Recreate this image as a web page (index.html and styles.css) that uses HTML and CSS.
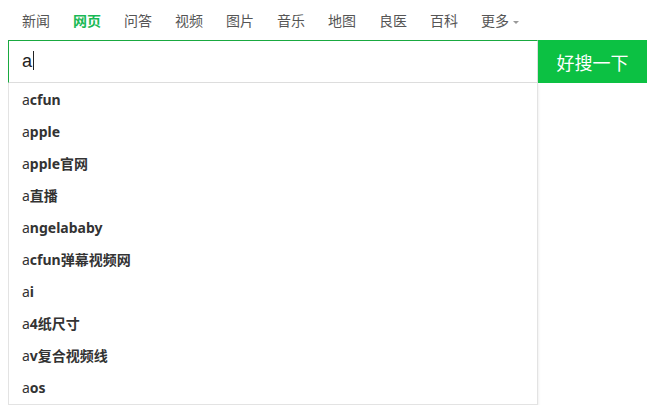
FILE: index.html
```html
<!DOCTYPE html>
<html lang="zh-CN">
<head>
    <meta charset="UTF-8">
    <meta name="viewport" content="width=device-width, initial-scale=1.0">
    <link rel="stylesheet" href="styles.css">
</head>
<body>

    <div class="navbar">
        <a href="#">新闻</a>
        <a href="#" class="active">网页</a>
        <a href="#">问答</a>
        <a href="#">视频</a>
        <a href="#">图片</a>
        <a href="#">音乐</a>
        <a href="#">地图</a>
        <a href="#">良医</a>
        <a href="#">百科</a>
        <a href="#" class="more">更多<span class="caret"></span></a>
    </div>

    <div class="search">
        <div class="search-row">
            <div class="search-input">a<span class="cursor"></span></div>
            <button class="search-btn">好搜一下</button>
        </div>
        <ul class="suggest">
            <li>a<b>cfun</b></li>
            <li>a<b>pple</b></li>
            <li>a<b>pple官网</b></li>
            <li>a<b>直播</b></li>
            <li>a<b>ngelababy</b></li>
            <li>a<b>cfun弹幕视频网</b></li>
            <li>a<b>i</b></li>
            <li>a<b>4纸尺寸</b></li>
            <li>a<b>v复合视频线</b></li>
            <li>a<b>os</b></li>
        </ul>
    </div>

</body>
</html>
```

FILE: styles.css
```css
body {
    font-family: 'Noto Sans', 'Noto Sans CJK SC', sans-serif;
    background-color: #fff;
    margin: 8px;
    color: #333;
}

.navbar {
    display: flex;
    gap: 23px;
    padding-left: 14px;
    height: 26px;
    padding-bottom: 6px;
    align-items: center;
}

.navbar a {
    color: #555;
    font-size: 14px;
    text-decoration: none;
    line-height: 20px;
}

.navbar a.active {
    color: #19b955;
    font-weight: bold;
}

.caret {
    display: inline-block;
    width: 0;
    height: 0;
    margin-left: 4px;
    vertical-align: middle;
    border-left: 3px solid transparent;
    border-right: 3px solid transparent;
    border-top: 3px solid #999;
}

.search-row {
    display: flex;
    height: 43px;
}

.search-input {
    box-sizing: border-box;
    width: 530px;
    flex-shrink: 0;
    height: 43px;
    border: 1px solid #ddd;
    border-top-color: #19a940;
    border-left-color: #19a940;
    padding-left: 13px;
    font-size: 18px;
    line-height: 41px;
    color: #222;
    font-family: 'Liberation Sans', 'Noto Sans CJK SC', sans-serif;
}

.cursor {
    display: inline-block;
    width: 1px;
    height: 19px;
    background: #222;
    vertical-align: -3px;
    margin-left: 1px;
}

.search-btn {
    width: 110px;
    height: 43px;
    border: none;
    background-color: #0cc143;
    color: #fff;
    font-size: 18px;
    font-family: 'Noto Sans CJK SC', sans-serif;
    padding: 0;
    cursor: pointer;
}

.suggest {
    list-style: none;
    margin: 0;
    padding: 1px 0 0;
    width: 530px;
    box-sizing: border-box;
    border: 1px solid #e3e3e3;
    border-top: none;
    box-shadow: 1px 1px 2px rgba(0, 0, 0, 0.06);
}

.suggest li {
    height: 32px;
    line-height: 32px;
    padding-left: 13px;
    font-size: 14px;
    color: #333;
}

.suggest b {
    font-weight: bold;
}
```
